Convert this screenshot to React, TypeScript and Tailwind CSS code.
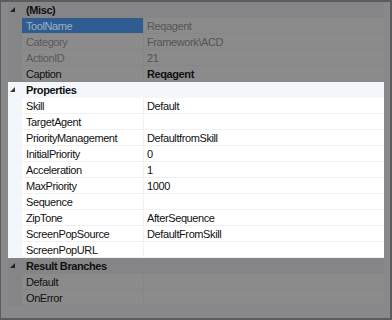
import React from 'react';

type Row = {
  name: string;
  value?: string;
  bold?: boolean;
  disabled?: boolean;
  selected?: boolean;
};

type Section = {
  title: string;
  active: boolean;
  rows: Row[];
};

const sections: Section[] = [
  {
    title: '(Misc)',
    active: false,
    rows: [
      { name: 'ToolName', value: 'Reqagent', selected: true, disabled: true },
      { name: 'Category', value: 'Framework\\ACD', disabled: true },
      { name: 'ActionID', value: '21', disabled: true },
      { name: 'Caption', value: 'Reqagent', bold: true },
    ],
  },
  {
    title: 'Properties',
    active: true,
    rows: [
      { name: 'Skill', value: 'Default' },
      { name: 'TargetAgent' },
      { name: 'PriorityManagement', value: 'DefaultfromSkill' },
      { name: 'InitialPriority', value: '0' },
      { name: 'Acceleration', value: '1' },
      { name: 'MaxPriority', value: '1000' },
      { name: 'Sequence' },
      { name: 'ZipTone', value: 'AfterSequence' },
      { name: 'ScreenPopSource', value: 'DefaultFromSkill' },
      { name: 'ScreenPopURL' },
    ],
  },
  {
    title: 'Result Branches',
    active: false,
    rows: [{ name: 'Default' }, { name: 'OnError' }],
  },
];

function Glyph({ active }: { active: boolean }) {
  return (
    <svg width="6" height="6" viewBox="0 0 6 6" className="ml-[2px]">
      <polygon points="5,0 5,5 0,5" fill={active ? '#3c3c3c' : '#222'} />
    </svg>
  );
}

function SectionBlock({ s }: { s: Section }) {
  const headBg = s.active ? 'bg-[#f3f6fb]' : 'bg-[#858588]';
  return (
    <div className={s.active ? 'bg-white' : 'bg-[#8b8b8c]'}>
      <div className={`flex h-4 items-center ${headBg}`}>
        <div className="flex w-[18px] items-center">
          <Glyph active={s.active} />
        </div>
        <span className="font-bold text-[#111]">{s.title}</span>
      </div>
      {s.rows.map((r) => (
        <div key={r.name} className="flex h-4">
          <div className={`w-[14px] shrink-0 ${headBg}`} />
          <div
            className={`flex w-[122px] shrink-0 items-center border-b border-r pl-[4px] ${
              s.active ? 'border-[#f0f0f0]' : 'border-[#868687]'
            } ${r.selected ? 'bg-[#2f5d92] text-[#9eb1c5]' : r.disabled ? 'text-[#5a5a5a]' : 'text-[#111]'}`}
          >
            {r.name}
          </div>
          <div
            className={`flex flex-1 items-center border-b pl-[3px] ${
              s.active ? 'border-[#f0f0f0]' : 'border-[#868687]'
            } ${r.disabled ? 'text-[#555]' : 'text-[#111]'} ${r.bold ? 'font-bold' : ''}`}
          >
            {r.value}
          </div>
        </div>
      ))}
    </div>
  );
}

export default function App() {
  return (
    <div
      className="h-[320px] w-[392px] overflow-hidden border-t-2 border-r-2 border-b-2 border-l border-[#5c5c5e] bg-[#89898b] pl-[7px] pr-[6px] text-[11px] leading-[16px] tracking-[-0.4px]"
      style={{ fontFamily: '"Liberation Sans", Arial, sans-serif' }}
    >
      {sections.map((s) => (
        <SectionBlock key={s.title} s={s} />
      ))}
    </div>
  );
}
